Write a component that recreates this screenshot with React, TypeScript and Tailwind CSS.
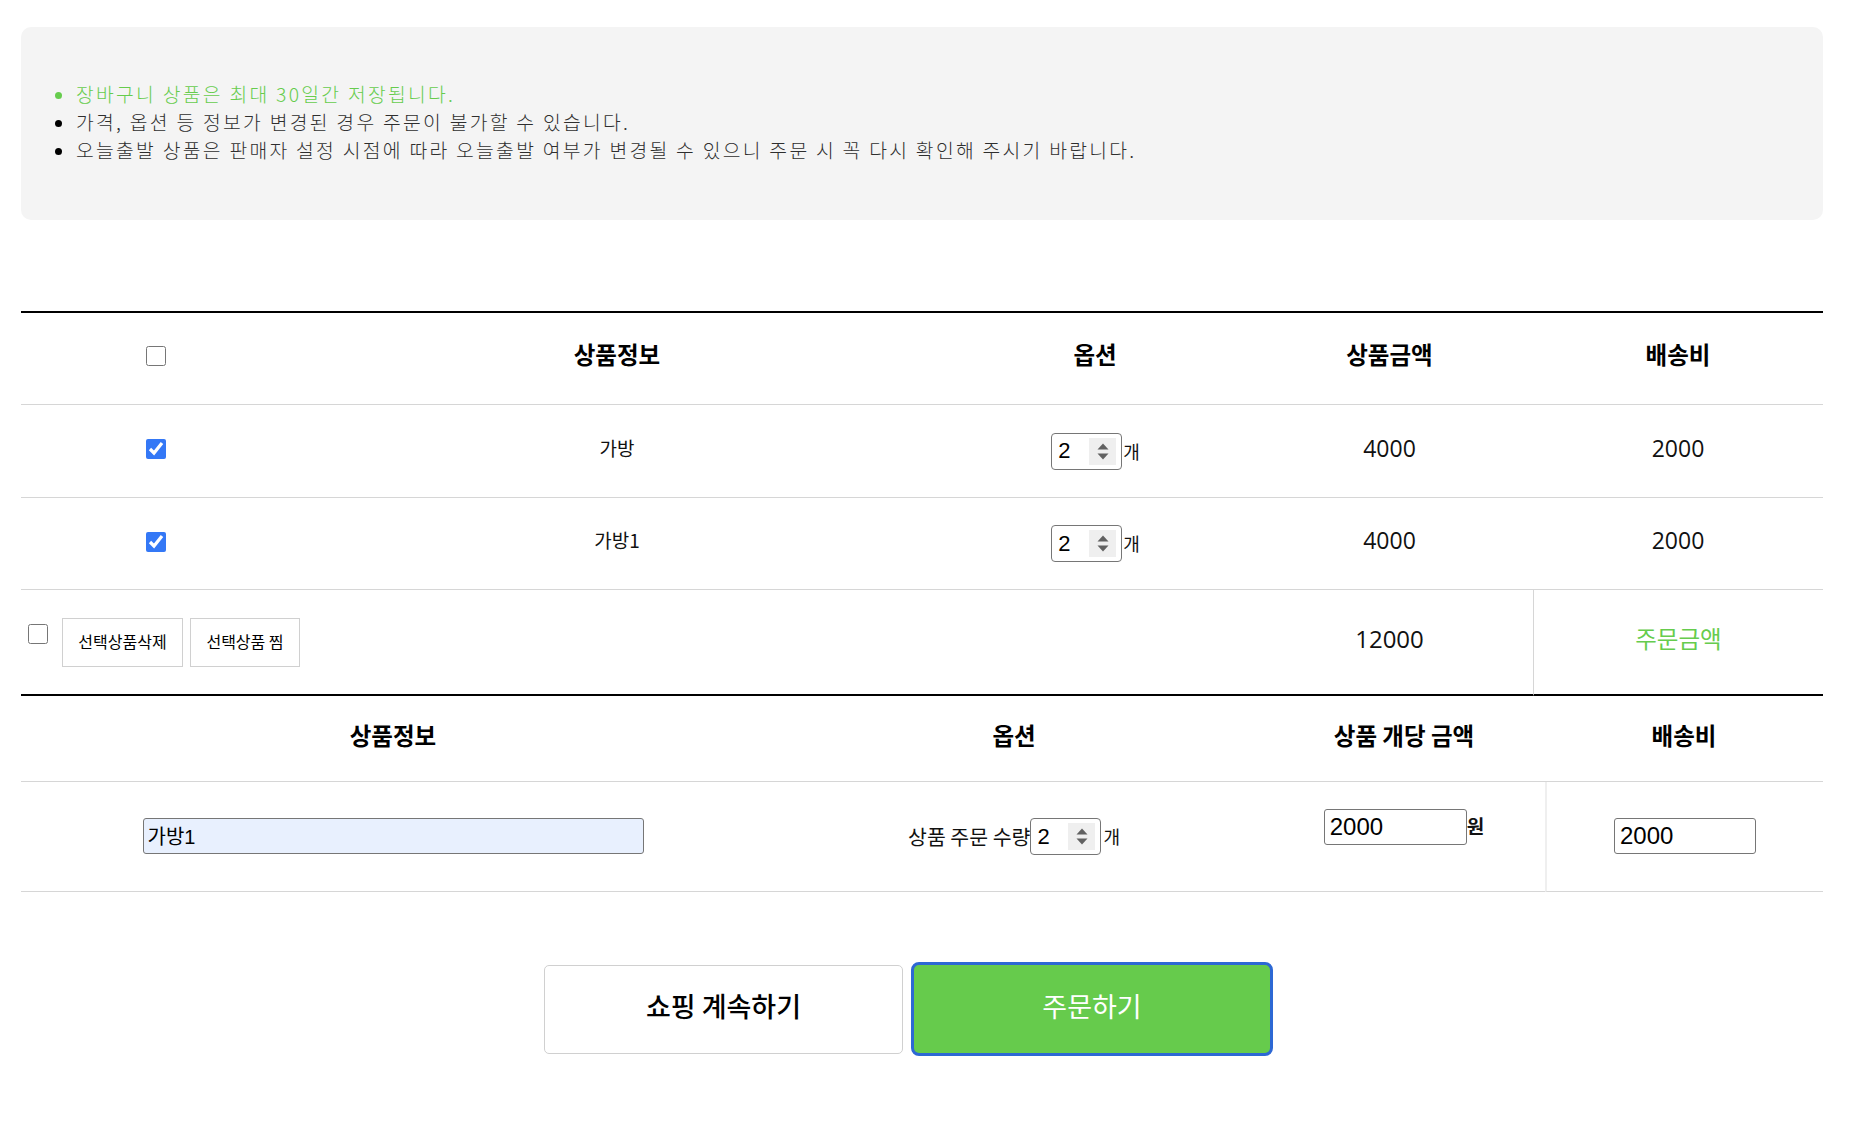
import React from "react";

function Spinner() {
  return (
    <span className="flex h-[27px] w-[27px] items-center justify-center bg-[#efefef]">
      <svg width="12" height="17" viewBox="0 0 12 17">
        <path d="M6 0.5 L11.5 6.5 H0.5 Z" fill="#616161" />
        <path d="M6 16.5 L11.5 10.5 H0.5 Z" fill="#616161" />
      </svg>
    </span>
  );
}

function QtyBox() {
  return (
    <span className="flex h-[37px] w-[71px] items-center justify-between rounded-[4px] border border-[#767676] bg-white pl-[6px] pr-[5px] font-['Liberation_Sans','Noto_Sans_CJK_KR',sans-serif] text-[22px] leading-none text-black">
      <span>2</span>
      <Spinner />
    </span>
  );
}

function Check({ checked }: { checked?: boolean }) {
  return (
    <input
      type="checkbox"
      defaultChecked={checked}
      className="m-0 block h-5 w-5 accent-[#3478f6]"
    />
  );
}

const items = [
  { name: "가방", price: 4000, ship: 2000 },
  { name: "가방1", price: 4000, ship: 2000 },
];

export default function App() {
  return (
    <div className="min-h-[1132px] bg-white pt-[27px] font-['Noto_Sans_CJK_KR',sans-serif] text-[#111]">
      <div className="ml-[21px] h-[193px] w-[1802px] rounded-[10px] bg-[#f4f4f4] pt-[53px]">
        <ul className="list-disc pl-[55px] text-[19.3px] font-light leading-[28px] tracking-[2.3px] text-[#2e2e2e]">
          <li className="text-[#66cc4d]">장바구니 상품은 최대 30일간 저장됩니다.</li>
          <li className="marker:text-black">가격, 옵션 등 정보가 변경된 경우 주문이 불가할 수 있습니다.</li>
          <li className="marker:text-black">
            오늘출발 상품은 판매자 설정 시점에 따라 오늘출발 여부가 변경될 수 있으니 주문 시 꼭 다시 확인해 주시기 바랍니다.
          </li>
        </ul>
      </div>

      <table className="ml-[21px] mt-[91px] w-[1802px] table-fixed border-separate border-spacing-0 border-t-2 border-black">
        <colgroup>
          <col className="w-[269px]" />
          <col className="w-[654px]" />
          <col className="w-[302px]" />
          <col className="w-[287px]" />
          <col className="w-[290px]" />
        </colgroup>
        <thead>
          <tr className="text-[23.5px] font-bold text-black">
            <th className="h-[92px] border-b border-[#d6d6d6] p-0 pb-[6px]">
              <div className="flex justify-center">
                <Check />
              </div>
            </th>
            <th className="h-[92px] border-b border-[#d6d6d6] p-0 pb-[7px]">상품정보</th>
            <th className="h-[92px] border-b border-[#d6d6d6] p-0 pb-[7px]">옵션</th>
            <th className="h-[92px] border-b border-[#d6d6d6] p-0 pb-[7px]">상품금액</th>
            <th className="h-[92px] border-b border-[#d6d6d6] p-0 pb-[7px]">배송비</th>
          </tr>
        </thead>
        <tbody>
          {items.map((it, i) => (
            <tr key={it.name} className="text-center">
              <td className={`${i === 0 ? "h-[93px]" : "h-[92px]"} border-b border-[#d6d6d6] p-0 pb-[4px]`}>
                <div className="flex justify-center">
                  <Check checked />
                </div>
              </td>
              <td className="border-b border-[#d6d6d6] p-0 pb-[6px] text-[19px] text-[#111]">{it.name}</td>
              <td className="border-b border-[#d6d6d6] p-0">
                <div className="flex items-center justify-center pl-[1px]">
                  <QtyBox />
                  <span className="pl-[1px] text-[18px] text-[#111]">개</span>
                </div>
              </td>
              <td className="border-b border-[#d6d6d6] p-0 pb-[6px] font-['Open_Sans',sans-serif] text-[23px] text-[#111]">
                {it.price}
              </td>
              <td className="border-b border-[#d6d6d6] p-0 pb-[6px] font-['Open_Sans',sans-serif] text-[23px] text-[#111]">
                {it.ship}
              </td>
            </tr>
          ))}
          <tr>
            <td colSpan={3} className="h-[106px] border-b-2 border-black p-0">
              <div className="flex items-start pl-[7px]">
                <span className="mt-[6px]">
                  <Check />
                </span>
                <button className="ml-[14px] h-[49px] w-[121px] border border-[#d0d0d0] bg-white pb-[2px] text-[16px] text-black">
                  선택상품삭제
                </button>
                <button className="ml-[7px] h-[49px] w-[110px] border border-[#d0d0d0] bg-white pb-[2px] text-[16px] text-black">
                  선택상품 찜
                </button>
              </div>
            </td>
            <td className="border-b-2 border-black p-0 pb-[6px] text-center font-['Open_Sans',sans-serif] text-[24px] text-[#111]">
              12000
            </td>
            <td className="border-b-2 border-l border-b-black border-l-[#d6d6d6] p-0 pb-[6px] text-center text-[23.5px] text-[#66cc4d]">
              주문금액
            </td>
          </tr>
        </tbody>
      </table>

      <table className="ml-[21px] w-[1802px] table-fixed border-separate border-spacing-0">
        <colgroup>
          <col className="w-[744px]" />
          <col className="w-[498px]" />
          <col className="w-[282px]" />
          <col className="w-[278px]" />
        </colgroup>
        <thead>
          <tr className="text-[23.5px] font-bold text-black">
            <th className="h-[86px] border-b border-[#d6d6d6] p-0 pb-[6px]">상품정보</th>
            <th className="h-[86px] border-b border-[#d6d6d6] p-0 pb-[6px]">옵션</th>
            <th className="h-[86px] border-b border-[#d6d6d6] p-0 pb-[6px]">상품 개당 금액</th>
            <th className="h-[86px] border-b border-[#d6d6d6] p-0 pb-[6px]">배송비</th>
          </tr>
        </thead>
        <tbody>
          <tr>
            <td className="h-[110px] border-b border-[#d6d6d6] p-0 pb-[2px]">
              <div className="flex justify-center">
                <input
                  readOnly
                  value="가방1"
                  className="h-[36px] w-[501px] rounded-[3px] border border-[#767676] bg-[#e8f0fe] px-[4px] font-['Liberation_Sans','Noto_Sans_CJK_KR',sans-serif] text-[20px] text-black outline-none"
                />
              </div>
            </td>
            <td className="border-b border-[#d6d6d6] p-0">
              <div className="flex items-center justify-center">
                <span className="text-[20.5px] text-[#111]">상품 주문 수량</span>
                <QtyBox />
                <span className="pl-[2px] text-[18px] text-[#111]">개</span>
              </div>
            </td>
            <td className="border-b border-[#d6d6d6] p-0">
              <div className="mb-[20px] flex items-start justify-center">
                <input
                  readOnly
                  value="2000"
                  className="h-[36px] w-[143px] rounded-[3px] border border-[#767676] bg-white px-[5px] font-['Liberation_Sans',sans-serif] text-[24px] text-black outline-none"
                />
                <span className="mt-[3px] text-[19px] font-bold text-[#111]">원</span>
              </div>
            </td>
            <td className="border-b border-l-2 border-b-[#d6d6d6] border-l-[#efefef] p-0 pb-[2px]">
              <div className="flex justify-center">
                <input
                  readOnly
                  value="2000"
                  className="h-[36px] w-[142px] rounded-[3px] border border-[#767676] bg-white px-[5px] font-['Liberation_Sans',sans-serif] text-[24px] text-black outline-none"
                />
              </div>
            </td>
          </tr>
        </tbody>
      </table>

      <div className="mt-[70px] flex items-center gap-[8px] pl-[544px]">
        <button className="h-[89px] w-[359px] rounded-[5px] border border-[#d0d0d0] bg-white pb-[6px] text-[27px] font-medium text-black">
          쇼핑 계속하기
        </button>
        <button className="h-[94px] w-[362px] rounded-[8px] border-[3px] border-[#2d68d4] bg-[#66cb4c] pb-[6px] text-[27px] text-white">
          주문하기
        </button>
      </div>
    </div>
  );
}
